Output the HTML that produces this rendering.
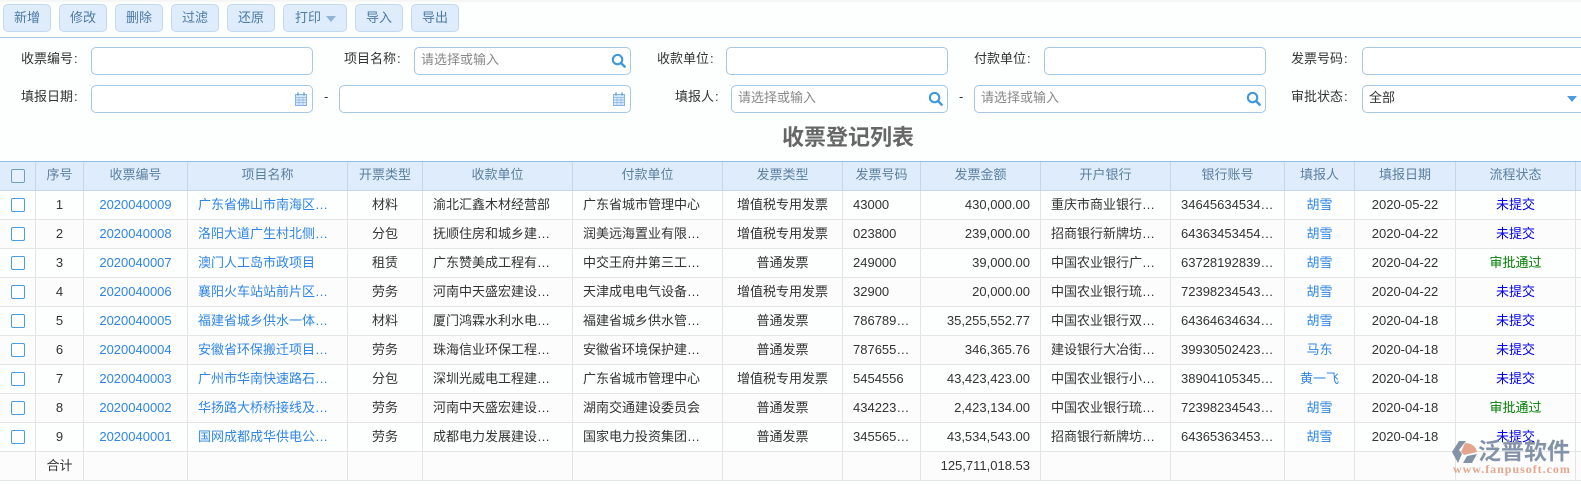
<!DOCTYPE html>
<html lang="zh-CN"><head><meta charset="utf-8"><title>收票登记列表</title>
<style>
html,body{margin:0;padding:0}
body{width:1581px;height:484px;overflow:hidden;position:relative;background:#fdfefe;font:13px/1 "Liberation Sans","Noto Sans CJK SC",sans-serif;color:#333}
.abs{position:absolute}
.btn{position:absolute;top:4px;height:28px;box-sizing:border-box;background:#deecfb;border:1px solid #c3d9ee;border-radius:5px;color:#4c7aa6;text-align:center;line-height:26px}
.line{position:absolute;left:0;top:37px;width:1581px;height:1px;background:#a9c9e2}
.topline{position:absolute;left:0;top:0;width:1581px;height:2px;background:#f6f6f6}
.inp{position:absolute;height:28px;box-sizing:border-box;background:#fff;border:1px solid #a5c8e4;border-radius:5px;line-height:24px;padding-left:6px;color:#888}
.lb{position:absolute;height:28px;line-height:26px;color:#333;white-space:nowrap}
.lb i{font-style:normal;margin-left:1px}
.ic{position:absolute}
h1{position:absolute;margin:0;left:748px;width:200px;top:126px;text-align:center;font-size:22px;line-height:24px;font-weight:bold;color:#666}
table{position:absolute;left:0;top:161px;width:1581px;table-layout:fixed;border-collapse:separate;border-spacing:0;border-top:1px solid #8fc0e8}
th,td{box-sizing:border-box;padding:0 10px;white-space:nowrap;overflow:hidden;font-weight:normal}
th{height:29px;padding-bottom:3px;background:#deecfb;color:#5b7f9f;text-align:center;border-right:1px solid #c2d7ea;border-bottom:1px solid #c2d7ea}
td{height:29px;padding-bottom:2px;border-right:1px solid #e4e4e4;border-bottom:1px solid #e4e4e4;color:#333;text-align:left}
tr:nth-child(even) td{background:#fdfcfd}
.c{text-align:center}.r{text-align:right}
td.l,.l{color:#2f86e6}
.n{color:#0000f0}.g{color:#008000}
th:first-child,td:first-child{padding:0 0 2px;text-align:center}
.cb{display:inline-block;width:14px;height:14px;box-sizing:border-box;border:1px solid #4a9be0;border-radius:2px;background:#fff;vertical-align:middle;position:relative;top:1px}
th .cb{border-color:#6d9fc8;background:#e6f1fc}
.wm1{position:absolute;left:1478px;top:439px;font-size:23px;line-height:24px;font-weight:bold;color:#8492a8;white-space:nowrap}
.wm2{position:absolute;left:1453px;top:463px;font:bold 12px/12px "Liberation Serif",serif;letter-spacing:.97px;color:#e3a68d;white-space:nowrap}
</style></head><body>
<div class="topline"></div>
<div class="btn" style="left:3px;width:48px">新增</div>
<div class="btn" style="left:59px;width:48px">修改</div>
<div class="btn" style="left:115px;width:48px">删除</div>
<div class="btn" style="left:171px;width:48px">过滤</div>
<div class="btn" style="left:227px;width:48px">还原</div>
<div class="btn" style="left:283px;width:64px;text-align:left;padding-left:11px">打印<svg style="position:absolute;left:42px;top:11px" width="10" height="6"><path d="M0 0h10L5 6z" fill="#8fb4d8"/></svg></div>
<div class="btn" style="left:355px;width:48px">导入</div>
<div class="btn" style="left:411px;width:48px">导出</div>
<div class="line"></div>

<div class="lb" style="left:21px;top:46px">收票编号<i>:</i></div>
<div class="inp" style="left:91px;top:47px;width:222px"></div>
<div class="lb" style="left:344px;top:46px">项目名称<i>:</i></div>
<div class="inp" style="left:414px;top:47px;width:217px">请选择或输入<svg class="ic" style="right:4px;top:5px" width="15" height="15" viewBox="0 0 16 16"><circle cx="7" cy="7" r="5" fill="none" stroke="#3f97de" stroke-width="2.2"/><path d="M10.8 10.8L14.5 14.5" stroke="#3f97de" stroke-width="2.6" stroke-linecap="round"/></svg></div>
<div class="lb" style="left:657px;top:46px">收款单位<i>:</i></div>
<div class="inp" style="left:726px;top:47px;width:222px"></div>
<div class="lb" style="left:974px;top:46px">付款单位<i>:</i></div>
<div class="inp" style="left:1044px;top:47px;width:222px"></div>
<div class="lb" style="left:1291px;top:46px">发票号码<i>:</i></div>
<div class="inp" style="left:1362px;top:47px;width:240px"></div>

<div class="lb" style="left:21px;top:84px">填报日期<i>:</i></div>
<div class="inp" style="left:91px;top:85px;width:222px"><svg class="ic" style="right:5px;top:6px" width="12" height="14" viewBox="0 0 12 14"><rect x=".5" y="2.5" width="11" height="11" fill="#d8e8f9" stroke="#85b3e6"/><path d="M3 .5v3M9 .5v3" stroke="#6ba3e0" stroke-width="1.6"/><path d="M.5 5.5h11M.5 8h11M.5 10.5h11M4 5.5v8M8 5.5v8" stroke="#8fb9e6" stroke-width=".8"/></svg></div>
<div class="lb" style="left:324px;top:84px">-</div>
<div class="inp" style="left:339px;top:85px;width:292px"><svg class="ic" style="right:5px;top:6px" width="12" height="14" viewBox="0 0 12 14"><rect x=".5" y="2.5" width="11" height="11" fill="#d8e8f9" stroke="#85b3e6"/><path d="M3 .5v3M9 .5v3" stroke="#6ba3e0" stroke-width="1.6"/><path d="M.5 5.5h11M.5 8h11M.5 10.5h11M4 5.5v8M8 5.5v8" stroke="#8fb9e6" stroke-width=".8"/></svg></div>
<div class="lb" style="left:675px;top:84px">填报人<i>:</i></div>
<div class="inp" style="left:731px;top:85px;width:217px">请选择或输入<svg class="ic" style="right:4px;top:5px" width="15" height="15" viewBox="0 0 16 16"><circle cx="7" cy="7" r="5" fill="none" stroke="#3f97de" stroke-width="2.2"/><path d="M10.8 10.8L14.5 14.5" stroke="#3f97de" stroke-width="2.6" stroke-linecap="round"/></svg></div>
<div class="lb" style="left:959px;top:84px">-</div>
<div class="inp" style="left:974px;top:85px;width:292px">请选择或输入<svg class="ic" style="right:4px;top:5px" width="15" height="15" viewBox="0 0 16 16"><circle cx="7" cy="7" r="5" fill="none" stroke="#3f97de" stroke-width="2.2"/><path d="M10.8 10.8L14.5 14.5" stroke="#3f97de" stroke-width="2.6" stroke-linecap="round"/></svg></div>
<div class="lb" style="left:1291px;top:84px">审批状态<i>:</i></div>
<div class="inp" style="left:1362px;top:85px;width:240px;color:#333">全部</div>
<svg class="ic" style="left:1567px;top:96px" width="10" height="6"><path d="M0 0h10L5 6z" fill="#4f9be0"/></svg>

<h1>收票登记列表</h1>

<table>
<colgroup><col style="width:36px"><col style="width:48px"><col style="width:104px"><col style="width:160px"><col style="width:75px"><col style="width:150px"><col style="width:150px"><col style="width:120px"><col style="width:78px"><col style="width:120px"><col style="width:130px"><col style="width:114px"><col style="width:70px"><col style="width:101px"><col style="width:120px"><col style="width:5px"></colgroup>
<thead><tr><th><span class="cb"></span></th><th>序号</th><th>收票编号</th><th>项目名称</th><th>开票类型</th><th>收款单位</th><th>付款单位</th><th>发票类型</th><th>发票号码</th><th>发票金额</th><th>开户银行</th><th>银行账号</th><th>填报人</th><th>填报日期</th><th>流程状态</th><th style="padding:0;border-right:0"></th></tr></thead>
<tbody>
<tr><td><span class="cb"></span></td><td class="c">1</td><td class="c l">2020040009</td><td class="l">广东省佛山市南海区…</td><td class="c">材料</td><td>渝北汇鑫木材经营部</td><td>广东省城市管理中心</td><td class="c">增值税专用发票</td><td>43000</td><td class="r">430,000.00</td><td>重庆市商业银行…</td><td>34645634534…</td><td class="c l">胡雪</td><td class="c">2020-05-22</td><td class="c n">未提交</td><td style="padding:0;border-right:0"></td></tr>
<tr><td><span class="cb"></span></td><td class="c">2</td><td class="c l">2020040008</td><td class="l">洛阳大道广生村北侧…</td><td class="c">分包</td><td>抚顺住房和城乡建…</td><td>润美远海置业有限…</td><td class="c">增值税专用发票</td><td>023800</td><td class="r">239,000.00</td><td>招商银行新牌坊…</td><td>64363453454…</td><td class="c l">胡雪</td><td class="c">2020-04-22</td><td class="c n">未提交</td><td style="padding:0;border-right:0"></td></tr>
<tr><td><span class="cb"></span></td><td class="c">3</td><td class="c l">2020040007</td><td class="l">澳门人工岛市政项目</td><td class="c">租赁</td><td>广东赞美成工程有…</td><td>中交王府井第三工…</td><td class="c">普通发票</td><td>249000</td><td class="r">39,000.00</td><td>中国农业银行广…</td><td>63728192839…</td><td class="c l">胡雪</td><td class="c">2020-04-22</td><td class="c g">审批通过</td><td style="padding:0;border-right:0"></td></tr>
<tr><td><span class="cb"></span></td><td class="c">4</td><td class="c l">2020040006</td><td class="l">襄阳火车站站前片区…</td><td class="c">劳务</td><td>河南中天盛宏建设…</td><td>天津成电电气设备…</td><td class="c">增值税专用发票</td><td>32900</td><td class="r">20,000.00</td><td>中国农业银行琉…</td><td>72398234543…</td><td class="c l">胡雪</td><td class="c">2020-04-22</td><td class="c n">未提交</td><td style="padding:0;border-right:0"></td></tr>
<tr><td><span class="cb"></span></td><td class="c">5</td><td class="c l">2020040005</td><td class="l">福建省城乡供水一体…</td><td class="c">材料</td><td>厦门鸿霖水利水电…</td><td>福建省城乡供水管…</td><td class="c">普通发票</td><td>786789…</td><td class="r">35,255,552.77</td><td>中国农业银行双…</td><td>64364634634…</td><td class="c l">胡雪</td><td class="c">2020-04-18</td><td class="c n">未提交</td><td style="padding:0;border-right:0"></td></tr>
<tr><td><span class="cb"></span></td><td class="c">6</td><td class="c l">2020040004</td><td class="l">安徽省环保搬迁项目…</td><td class="c">劳务</td><td>珠海信业环保工程…</td><td>安徽省环境保护建…</td><td class="c">普通发票</td><td>787655…</td><td class="r">346,365.76</td><td>建设银行大冶街…</td><td>39930502423…</td><td class="c l">马东</td><td class="c">2020-04-18</td><td class="c n">未提交</td><td style="padding:0;border-right:0"></td></tr>
<tr><td><span class="cb"></span></td><td class="c">7</td><td class="c l">2020040003</td><td class="l">广州市华南快速路石…</td><td class="c">分包</td><td>深圳光威电工程建…</td><td>广东省城市管理中心</td><td class="c">增值税专用发票</td><td>5454556</td><td class="r">43,423,423.00</td><td>中国农业银行小…</td><td>38904105345…</td><td class="c l">黄一飞</td><td class="c">2020-04-18</td><td class="c n">未提交</td><td style="padding:0;border-right:0"></td></tr>
<tr><td><span class="cb"></span></td><td class="c">8</td><td class="c l">2020040002</td><td class="l">华扬路大桥桥接线及…</td><td class="c">劳务</td><td>河南中天盛宏建设…</td><td>湖南交通建设委员会</td><td class="c">普通发票</td><td>434223…</td><td class="r">2,423,134.00</td><td>中国农业银行琉…</td><td>72398234543…</td><td class="c l">胡雪</td><td class="c">2020-04-18</td><td class="c g">审批通过</td><td style="padding:0;border-right:0"></td></tr>
<tr><td><span class="cb"></span></td><td class="c">9</td><td class="c l">2020040001</td><td class="l">国网成都成华供电公…</td><td class="c">劳务</td><td>成都电力发展建设…</td><td>国家电力投资集团…</td><td class="c">普通发票</td><td>345565…</td><td class="r">43,534,543.00</td><td>招商银行新牌坊…</td><td>64365363453…</td><td class="c l">胡雪</td><td class="c">2020-04-18</td><td class="c n">未提交</td><td style="padding:0;border-right:0"></td></tr>
<tr><td></td><td class="c">合计</td><td></td><td></td><td></td><td></td><td></td><td></td><td></td><td class="r">125,711,018.53</td><td></td><td></td><td></td><td></td><td></td><td style="padding:0;border-right:0"></td></tr>
</tbody></table>

<svg class="ic" style="left:1451px;top:440px" width="27" height="24" viewBox="0 0 27 24"><path d="M8 1h7L8 10l3 4-4 9L1 12z" fill="#8492a8"/><path d="M14 3c6 0 11 3 12 9L13 15l-3-3z" fill="#e3a68d"/><path d="M12 23l4-7 10-2-5 9z" fill="#8492a8"/></svg>
<div class="wm1">泛普软件</div>
<div class="wm2">www.fanpusoft.com</div>
</body></html>
